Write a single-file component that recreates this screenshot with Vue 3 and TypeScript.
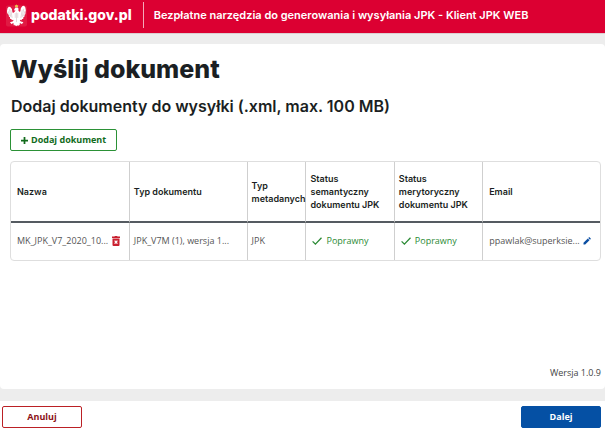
<script setup lang="ts">
interface DocumentRow {
  name: string
  type: string
  metadata: string
  semantic: string
  substantive: string
  email: string
}

const columns: string[][] = [
  ['Nazwa'],
  ['Typ dokumentu'],
  ['Typ', 'metadanych'],
  ['Status', 'semantyczny', 'dokumentu JPK'],
  ['Status', 'merytoryczny', 'dokumentu JPK'],
  ['Email'],
]

const rows: DocumentRow[] = [
  {
    name: 'MK_JPK_V7_2020_10...',
    type: 'JPK_V7M (1), wersja 1...',
    metadata: 'JPK',
    semantic: 'Poprawny',
    substantive: 'Poprawny',
    email: 'ppawlak@superksie...',
  },
]
</script>

<template>
  <div class="page">
    <header class="topbar">
      <a class="brand" href="#">
        <svg class="eagle" viewBox="0 0 22 24" aria-hidden="true">
          <rect x="0" y="2" width="22" height="22" rx="2" fill="#e01a43" />
          <path
            fill="#fff"
            d="M9 5.4 10 4.2h2.2l1 1.3-.3 1.6.9 1.6 1.2-.4.6-3.6 1.7-2 1.6-.4 1.3 1.7.6 3-.3 1.9-.2 2.3-.8.5-.2 2.2-1 .3-.3 1.9-1.1.1-.7 1.3-1.2-.5-.5.7 1 1.2 2.1.4.6 1.2-1.1.1-.3 1-1.5-1-1.1.2.4 1.9-1-.5-.7 1.2-.8-.6-.9 1.1-.9-1.1-.8.6-.7-1.2-1 .5.4-1.9-1.1-.2-1.5 1-.3-1-1.1-.1.6-1.2 2.1-.4 1-1.2-.5-.7-1.2.5-.7-1.3-1.1-.1-.3-1.9-1-.3-.2-2.2-.8-.5L1.3 9.9 1 8l.6-3 1.3-1.7 1.6.4 1.7 2 .6 3.6 1.2.4 1.4-1.6.5-1.2-1.7.3z"
          />
          <path
            fill="none"
            stroke="#d0b9bf"
            stroke-width=".6"
            d="M3.4 5.5 5 14M2.2 8l1.5 5.2M5 6.5 6.4 15M18.6 5.5 17 14M19.8 8l-1.5 5.2M17 6.5 15.6 15M9.7 10v5M11 9.4v10M12.3 10v5"
          />
          <path fill="#e9c34c" d="m9.3 1.2 1 .8.7-1.2.8 1.2 1-.8-.3 2.6h-3z" />
        </svg>
        <span class="brand-name">podatki.gov.pl</span>
      </a>
      <span class="tagline">Bezpłatne narzędzia do generowania i wysyłania JPK - Klient JPK WEB</span>
    </header>

    <main class="card">
      <h1>Wyślij dokument</h1>
      <h2>Dodaj dokumenty do wysyłki (.xml, max. 100 MB)</h2>
      <button type="button" class="btn add">
        <svg class="plus" viewBox="0 0 8 8" aria-hidden="true">
          <path d="M4 0v8M0 4h8" stroke="currentColor" stroke-width="2" />
        </svg>
        Dodaj dokument
      </button>

      <table class="documents">
        <colgroup>
          <col class="wide" />
          <col class="wide" />
          <col class="narrow" />
          <col class="medium" />
          <col class="medium" />
          <col class="wide" />
        </colgroup>
        <thead>
          <tr>
            <th v-for="(lines, i) in columns" :key="i" scope="col">
              <span v-for="line in lines" :key="line" class="line">{{ line }}</span>
            </th>
          </tr>
        </thead>
        <tbody>
          <tr v-for="row in rows" :key="row.name">
            <td>
              <div class="cell spread">
                <span>{{ row.name }}</span>
                <button type="button" class="icon-btn remove" aria-label="Usuń dokument">
                  <svg viewBox="0 0 8 10" aria-hidden="true">
                    <path fill="currentColor" d="M0 .5h2.4L3 0h2l.6.5H8V2H0zM.5 2.6h7V9q0 1-1 1h-5q-1 0-1-1z" />
                    <path d="m2.6 4.6 2.8 3M5.4 4.6l-2.8 3" stroke="#fff" stroke-width="1.3" />
                  </svg>
                </button>
              </div>
            </td>
            <td>{{ row.type }}</td>
            <td>{{ row.metadata }}</td>
            <td v-for="(status, i) in [row.semantic, row.substantive]" :key="i">
              <div class="cell status">
                <svg viewBox="0 0 10 8" aria-hidden="true">
                  <path d="M.6 4.4 3.4 7.1 9.5.8" fill="none" stroke="currentColor" stroke-width="1.3" />
                </svg>
                <span>{{ status }}</span>
              </div>
            </td>
            <td>
              <div class="cell spread">
                <span>{{ row.email }}</span>
                <button type="button" class="icon-btn edit" aria-label="Edytuj email">
                  <svg viewBox="0 0 8 8" aria-hidden="true">
                    <path fill="currentColor" d="M.5 7.5V5.8l4.3-4.3 1.7 1.7-4.3 4.3zM5.3 1l.7-.7q.3-.3.6 0l1.1 1.1q.3.3 0 .6L7 2.7z" />
                  </svg>
                </button>
              </div>
            </td>
          </tr>
        </tbody>
      </table>

      <p class="version">Wersja 1.0.9</p>
    </main>

    <footer class="actions">
      <button type="button" class="btn cancel">Anuluj</button>
      <button type="button" class="btn next">Dalej</button>
    </footer>
  </div>
</template>

<style>
body {
  margin: 0;
  background: #ededed;
}
</style>

<style scoped>
.page {
  display: flex;
  flex-direction: column;
  min-height: 100vh;
  color: #1b1f23;
  font-family: "Open Sans", "Noto Sans", sans-serif;
  font-size: 9px;
}

.topbar {
  display: flex;
  align-items: center;
  box-sizing: border-box;
  height: 34px;
  padding: 0 6px 4px;
  border-bottom: 1px solid #dccfd1;
  background: #dc0032;
  color: #fff;
  font-family: Inter, "Open Sans", sans-serif;
  white-space: nowrap;
}

.brand {
  display: flex;
  align-items: center;
  gap: 4px;
  padding-right: 11px;
  color: #fff;
  text-decoration: none;
}

.eagle {
  width: 21px;
  height: 24px;
}

.brand-name {
  font-size: 14px;
  font-weight: 800;
  line-height: 20px;
}

.tagline {
  padding-left: 10px;
  border-left: 1px solid #f4a9b8;
  font-size: 11px;
  font-weight: 600;
  line-height: 26px;
}

.card {
  display: flex;
  flex: 1;
  flex-direction: column;
  align-items: flex-start;
  margin: 10px 0 12px;
  padding: 8px 4px 8px 10px;
  border-radius: 4px;
  background: #fff;
}

h1,
h2 {
  margin: 0;
  padding-left: 1px;
  font-family: Inter, "Open Sans", sans-serif;
}

h1 {
  font-size: 25px;
  font-weight: 800;
  line-height: 34px;
}

h2 {
  margin-top: 10px;
  font-size: 16px;
  font-weight: 600;
  line-height: 20px;
}

.btn {
  box-sizing: border-box;
  height: 22px;
  padding: 0 10px;
  border: 1px solid;
  border-radius: 2px;
  background: #fff;
  font-family: inherit;
  font-size: 9px;
  font-weight: 700;
  line-height: 20px;
}

.add {
  display: flex;
  align-items: center;
  gap: 3px;
  margin-top: 13px;
  border-color: #2b9136;
  color: #126b1c;
}

.plus {
  width: 7px;
  height: 7px;
}

.documents {
  width: 100%;
  margin-top: 10px;
  border: 1px solid #dedede;
  border-radius: 4px;
  border-spacing: 0;
  table-layout: fixed;
}

.wide {
  width: 20%;
}

.narrow {
  width: 10%;
}

.medium {
  width: 15%;
}

th,
td {
  padding: 0 0 0 4px;
  border-left: 1px solid #cfcfcf;
  text-align: left;
  white-space: nowrap;
}

th {
  height: 59px;
  border-bottom: 2px solid #555b61;
  font-family: Inter, "Open Sans", sans-serif;
  font-size: 9px;
  font-weight: 600;
}

td {
  height: 35px;
  padding-bottom: 2px;
  color: #555;
}

th:first-child,
td:first-child,
th:last-child,
td:last-child {
  padding-left: 6px;
}

th:first-child,
td:first-child {
  border-left: 0;
}

.line {
  display: block;
  line-height: 13px;
}

.cell {
  display: flex;
  align-items: center;
}

.spread {
  justify-content: space-between;
  padding-right: 9px;
}

.status {
  gap: 4px;
  padding-left: 2px;
  color: #2b8a35;
}

.status svg {
  width: 10px;
  height: 8px;
}

.icon-btn {
  display: flex;
  padding: 0;
  border: 0;
  background: none;
}

.remove {
  color: #c9202f;
}

.remove svg {
  width: 8px;
  height: 10px;
}

.edit {
  color: #0b4ea2;
}

.edit svg {
  width: 8px;
  height: 8px;
}

.version {
  align-self: flex-end;
  margin: auto 0 0;
  color: #444;
  line-height: 16px;
}

.actions {
  display: flex;
  justify-content: space-between;
  padding: 5px 4px 2px 2px;
  background: #fff;
}

.cancel,
.next {
  width: 80px;
}

.cancel {
  border-color: #bb2025;
  color: #8b1116;
}

.next {
  border-color: #0550a4;
  background: #0550a4;
  color: #fff;
}
</style>
